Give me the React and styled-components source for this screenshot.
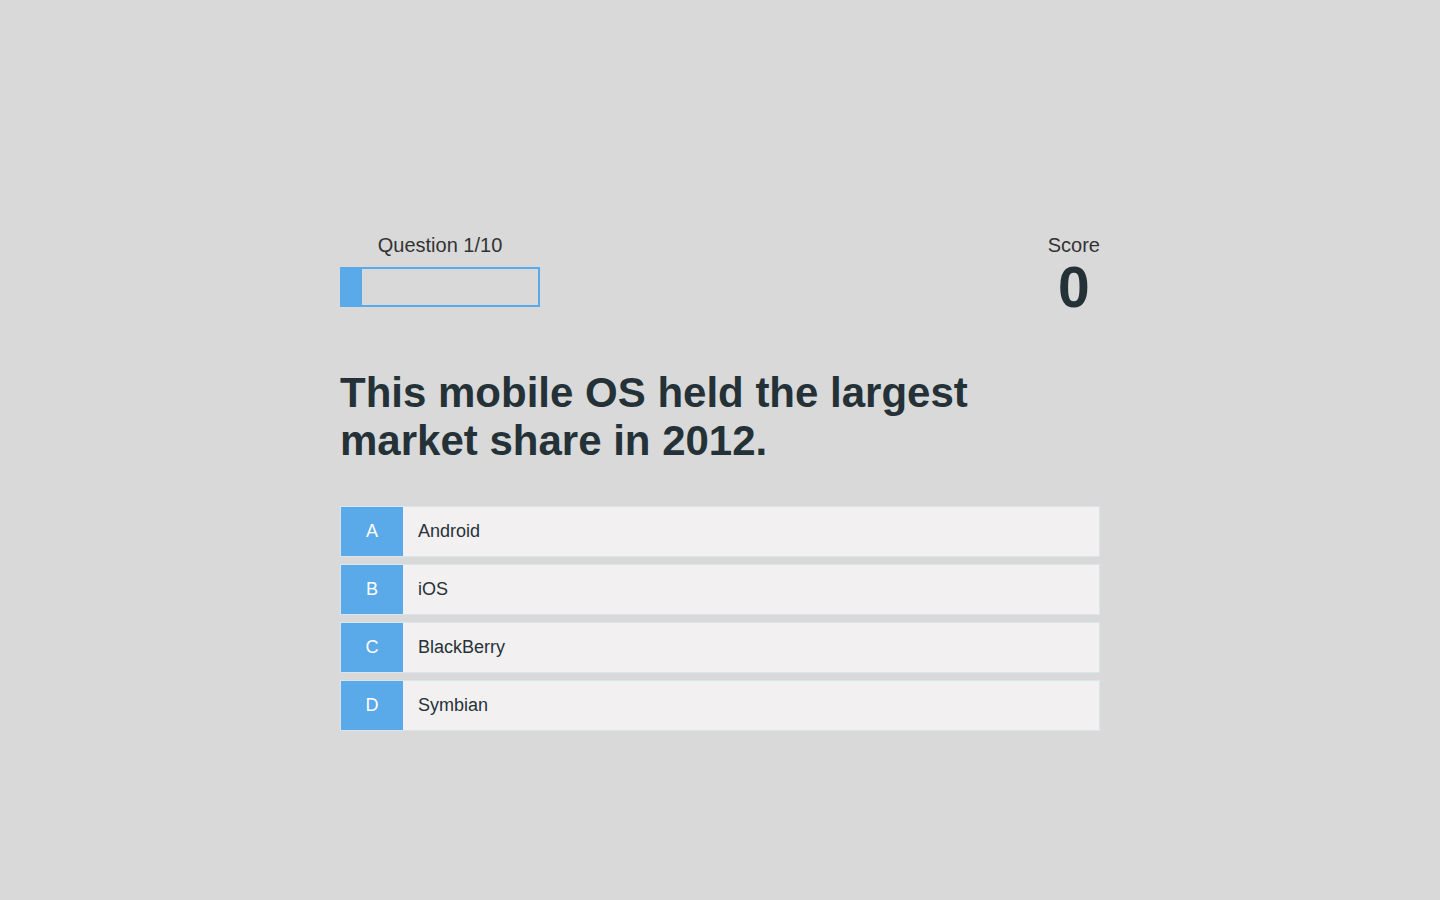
import React from 'react';
import styled, {createGlobalStyle} from 'styled-components';

const GlobalStyle = createGlobalStyle`
  html, body {
    margin: 0;
    padding: 0;
    background: #d9d9d9;
    font-family: "Liberation Sans", Arial, Helvetica, sans-serif;
    color: #263238;
  }
`

const Page = styled.div`
  min-height: 100vh;
  padding-top: 234px;
  box-sizing: border-box;
`

const Quiz = styled.div`
  width: 760px;
  margin: 0 auto;
`

const Header = styled.div`
  display: flex;
  justify-content: space-between;
  align-items: flex-start;
`

const Progress = styled.div`
  width: 200px;
  display: flex;
  flex-direction: column;
  gap: 10px;
`

const Label = styled.div`
  font-size: 20px;
  line-height: 23px;
  color: #333;
  text-align: center;
`

const Bar = styled.div`
  height: 40px;
  border: 2px solid #5aa9e8;
  box-sizing: border-box;
`

const Fill = styled.div`
  height: 100%;
  background: #5aa9e8;
`

const ScoreBox = styled.div`
  display: flex;
  flex-direction: column;
  align-items: center;
`

const ScoreValue = styled.div`
  font-size: 57px;
  font-weight: bold;
  line-height: 60px;
  color: #243238;
`

const Question = styled.h1`
  margin: 52px 0 41px 0;
  font-size: 42px;
  line-height: 48px;
  font-weight: bold;
  color: #243238;
`

const Options = styled.div`
  display: flex;
  flex-direction: column;
  gap: 7px;
`

const Option = styled.div`
  display: flex;
  height: 51px;
  border: 1px solid #d8e6f1;
  box-sizing: border-box;
  background: #f2f0f1;
  cursor: pointer;
`

const Letter = styled.div`
  width: 62px;
  display: flex;
  align-items: center;
  justify-content: center;
  background: #5aa9e8;
  color: #fff;
  font-size: 18px;
`

const Answer = styled.div`
  display: flex;
  align-items: center;
  padding-left: 15px;
  font-size: 18px;
  color: #263238;
`

const answers = ['Android', 'iOS', 'BlackBerry', 'Symbian'];
const letters = ['A', 'B', 'C', 'D'];

export default function App() {
  const current = 1;
  const total = 10;

  return (
    <Page>
      <GlobalStyle />
      <Quiz>
        <Header>
          <Progress>
            <Label>Question {current}/{total}</Label>
            <Bar>
              <Fill style={{width: `${(current / total) * 100}%`}} />
            </Bar>
          </Progress>
          <ScoreBox>
            <Label>Score</Label>
            <ScoreValue>0</ScoreValue>
          </ScoreBox>
        </Header>
        <Question>This mobile OS held the largest market share in 2012.</Question>
        <Options>
          {answers.map((a, i) => (
            <Option key={a}>
              <Letter>{letters[i]}</Letter>
              <Answer>{a}</Answer>
            </Option>
          ))}
        </Options>
      </Quiz>
    </Page>
  );
}
